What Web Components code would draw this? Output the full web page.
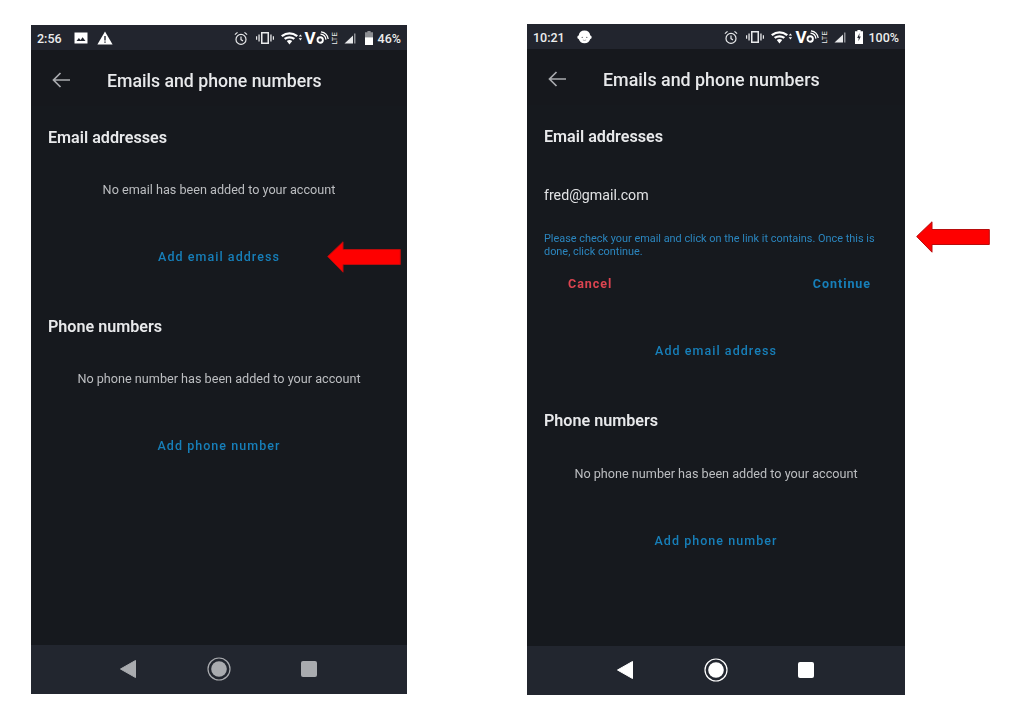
<!DOCTYPE html>
<html>
<head>
<meta charset="utf-8">
<title>Emails and phone numbers</title>
<style>
  html, body { margin: 0; padding: 0; background: #fff; }
  body { font-family: Roboto, "Noto Sans", sans-serif; }
</style>
</head>
<body>
<x-stage>
  <x-phone style="width: 376px; height: 669px; margin-top: 25px">
    <x-status-bar slot="status" time="2:56" level="46%" variant="left"></x-status-bar>
    <x-app-bar slot="bar" title="Emails and phone numbers"></x-app-bar>

    <x-section-title style="margin-top: 20px">Email addresses</x-section-title>
    <x-note style="margin-top: 30px">No email has been added to your account</x-note>
    <x-action center style="margin-top: 47px">Add email address</x-action>

    <x-section-title style="margin-top: 48px">Phone numbers</x-section-title>
    <x-note style="margin-top: 30px">No phone number has been added to your account</x-note>
    <x-action center style="margin-top: 47px">Add phone number</x-action>

    <x-nav-bar slot="nav" tone="#a9abaf"></x-nav-bar>
    <x-red-arrow slot="over" style="left: 296px; top: 216px"></x-red-arrow>
  </x-phone>

  <x-phone style="width: 378px; height: 671px; margin-top: 24px; margin-left: 120px; --title-size: 17.88px">
    <x-status-bar slot="status" time="10:21" level="100%" variant="right"></x-status-bar>
    <x-app-bar slot="bar" title="Emails and phone numbers"></x-app-bar>

    <x-section-title style="margin-top: 20px">Email addresses</x-section-title>
    <x-pending-email style="margin-top: 36px" email="fred@gmail.com">
      Please check your email and click on the link it contains. Once this is done, click continue.
    </x-pending-email>
    <x-action center style="margin-top: 47px">Add email address</x-action>

    <x-section-title style="margin-top: 48px">Phone numbers</x-section-title>
    <x-note style="margin-top: 31px">No phone number has been added to your account</x-note>
    <x-action center style="margin-top: 47px">Add phone number</x-action>

    <x-nav-bar slot="nav" tone="#ffffff"></x-nav-bar>
    <x-red-arrow slot="over" style="left: 389px; top: 197px"></x-red-arrow>
  </x-phone>
</x-stage>

<script>
const FONT = `Roboto, "Noto Sans", sans-serif`

const ICONS = {
  picture: `<svg width="14" height="12" viewBox="0 0 14 12"><path fill="#fff" d="M0.5 0.5h13v11h-13z"/><path fill="#22252e" d="M2.5 9l2.4-3 1.7 1.9 2-2.6L11.5 9z"/></svg>`,
  warning: `<svg width="16" height="14" viewBox="0 0 16 14"><path fill="#fff" d="M8 0.5L15.6 13.6H0.4z"/><path fill="#22252e" d="M7.3 5h1.4v4.6H7.3zM7.3 10.4h1.4v1.4H7.3z"/></svg>`,
  face: `<svg width="15" height="15" viewBox="0 0 15 15"><path fill="#fff" d="M7.500 0.600a6 6 0 0 1 5.800 5 1.800 1.800 0 0 1 0 3.500 6.100 6.100 0 0 1-11.600 0 1.800 1.800 0 0 1 0-3.500 6 6 0 0 1 5.800-5z"/><circle cx="5.200" cy="7.400" r="0.600" fill="#55585e"/><circle cx="9.800" cy="7.400" r="0.600" fill="#55585e"/><path d="M5.900 10q1.600 1 3.200 0" fill="none" stroke="#8b8d91" stroke-width="0.700"/></svg>`,
  alarm: `<svg width="14" height="15" viewBox="0 0 14 15" fill="none" stroke="#e8e9eb" stroke-width="1.2"><circle cx="7" cy="8.4" r="5"/><path d="M7 5.4v3.2l2 1.3M0.9 3.6l2.6-2.2M13.1 3.6l-2.6-2.2"/></svg>`,
  vibrate: `<svg width="18" height="12" viewBox="0 0 18 12" fill="#e8e9eb"><path fill-rule="evenodd" d="M5 0h8v12H5zM6.5 1.6v8.8h5V1.6z"/><path d="M2.4 2.4h1.3v7.2H2.4zM14.3 2.4h1.3v7.2h-1.3zM0 4.2h1.2v3.6H0zM16.8 4.2H18v3.6h-1.2z"/></svg>`,
  wifi: `<svg width="22" height="13" viewBox="0 0 22 13" fill="#fff"><path d="M0 3.2Q8.5-2.6 17 3.200l-1.500 1.700Q8.500 0.200 1.500 4.900z"/><path d="M2.900 6.100q5.600-3.800 11.200 0l-1.500 1.700q-4.100-2.600-8.200 0z"/><path d="M5.800 9q2.700-1.800 5.400 0L8.500 12.600z"/><path d="M19.400 2.400l1.700 2.200h-3.400zM19.400 8.400l-1.700-2.200h3.400z"/></svg>`,
  signal: `<svg width="12" height="11" viewBox="0 0 12 11" fill="#e8e9eb"><path d="M11.500 0.500v10H10V0.500z" opacity="0.550"/><path d="M9 2.500v8H0.500z"/></svg>`,
  batteryLow: `<svg width="8" height="14" viewBox="0 0 8 14"><path fill="#8c8e93" d="M2.400 0h3.200v1.200H8V7H0V1.200h2.400z"/><path fill="#fff" d="M0 6.400h8V14H0z"/></svg>`,
  batteryCharge: `<svg width="8" height="14" viewBox="0 0 8 14"><path fill="#fff" d="M2.400 0h3.200v1.200H8V14H0V1.200h2.400z"/><path fill="#22252e" d="M4.600 3L2.200 8h1.500l-0.300 3.200L5.800 6.400H4.200z"/></svg>`,
}

class Stage extends HTMLElement {
  constructor() {
    super()
    this.attachShadow({ mode: 'open' }).innerHTML = `
      <style>
        :host { display: flex; align-items: flex-start; box-sizing: border-box; width: 1016px; height: 717px; padding-left: 31px; overflow: hidden; font-family: ${FONT}; }
      </style>
      <slot></slot>`
  }
}

class Phone extends HTMLElement {
  constructor() {
    super()
    this.attachShadow({ mode: 'open' }).innerHTML = `
      <style>
        :host { display: flex; flex: none; flex-direction: column; position: relative; background: #16191e; }
        main { display: block; flex: 1; padding: 0 17px; }
        .filter { display: flex; flex-direction: column; height: 100%; filter: blur(0.35px); }
      </style>
      <div class="filter">
        <slot name="status"></slot>
        <slot name="bar"></slot>
        <main><slot></slot></main>
        <slot name="nav"></slot>
      </div>
      <slot name="over"></slot>`
  }
}

class StatusBar extends HTMLElement {
  constructor() {
    super()
    const left = this.getAttribute('variant') === 'left'
    this.attachShadow({ mode: 'open' }).innerHTML = `
      <style>
        :host { display: flex; align-items: center; flex: none; height: 25px; padding: 1px 6px 0; box-sizing: border-box; background: #22252e; color: #eceded; font-size: 12.5px; font-weight: 500; }
        .group { display: flex; align-items: center; }
        .time { margin-right: 12px; }
        .apps svg + svg { margin-left: 9px; }
        .icons { margin-left: auto; }
        .icons svg { flex: none; }
        .volte { display: flex; align-items: center; margin: 0 0 0 2px; }
        .v { font-size: 17px; font-weight: 700; line-height: 14px; color: #fff; width: 11px; }
        .lte { writing-mode: vertical-rl; transform: rotate(180deg); font-size: 7.5px; line-height: 8px; font-weight: 400; letter-spacing: 0.2px; }
        .level { margin-left: 5px; }
      </style>
      <div class="group apps">
        <span class="time">${this.getAttribute('time')}</span>
        ${left ? ICONS.picture + ICONS.warning : ICONS.face}
      </div>
      <div class="group icons">
        ${ICONS.alarm}
        <span style="width: 8px"></span>
        ${ICONS.vibrate}
        <span style="width: 7px"></span>
        ${ICONS.wifi}
        <div class="volte">
          <span class="v">V</span>
          <svg width="15" height="14" viewBox="0 0 15 14" fill="none" stroke="#fff"><circle cx="4.200" cy="9" r="2.700" stroke-width="1.900"/><path stroke-width="1.300" d="M4.500 3.200a6 6 0 0 1 5.400 5.400M5 0.800a8.500 8.500 0 0 1 7.200 7.200"/></svg>
          <span class="lte">LTE</span>
        </div>
        <span style="width: 5px"></span>
        ${ICONS.signal}
        <span style="width: 9px"></span>
        ${left ? ICONS.batteryLow : ICONS.batteryCharge}
        <span class="level">${this.getAttribute('level')}</span>
      </div>`
  }
}

class AppBar extends HTMLElement {
  constructor() {
    super()
    this.attachShadow({ mode: 'open' }).innerHTML = `
      <style>
        :host { display: flex; align-items: center; flex: none; height: 56px; padding: 6px 0 2px 21px; box-sizing: border-box; color: #e8e9eb; background: #16181d; }
        svg { margin-right: 37px; flex: none; }
        span { font-size: var(--title-size, 17.7px); font-weight: 500; line-height: 24px; position: relative; top: 0.5px; }
      </style>
      <svg width="18" height="16" viewBox="0 0 18 16" fill="none" stroke="#a9abaf" stroke-width="1.7"><path d="M18 8H1.500M8.500 1L1.500 8l7 7"/></svg>
      <span>${this.getAttribute('title')}</span>`
  }
}

class SectionTitle extends HTMLElement {
  constructor() {
    super()
    this.attachShadow({ mode: 'open' }).innerHTML = `
      <style>
        :host { display: block; height: 24px; line-height: 24px; font-size: 16.15px; font-weight: 600; color: #e8e9eb; }
      </style>
      <slot></slot>`
  }
}

class Note extends HTMLElement {
  constructor() {
    super()
    this.attachShadow({ mode: 'open' }).innerHTML = `
      <style>
        :host { display: block; height: 20px; line-height: 20px; font-size: 12.65px; text-align: center; color: #bcbec1; white-space: nowrap; }
      </style>
      <slot></slot>`
  }
}

class Action extends HTMLElement {
  constructor() {
    super()
    this.attachShadow({ mode: 'open' }).innerHTML = `
      <style>
        :host { display: block; height: 20px; line-height: 20px; font-size: 12.5px; font-weight: 500; letter-spacing: 1.05px; color: var(--action-color, #177fb9); white-space: nowrap; }
        :host([center]) { text-align: center; }
      </style>
      <slot></slot>`
  }
}

class PendingEmail extends HTMLElement {
  constructor() {
    super()
    this.attachShadow({ mode: 'open' }).innerHTML = `
      <style>
        :host { display: block; }
        .email { height: 20px; line-height: 20px; font-size: 14.2px; color: #e2e3e5; }
        .hint { margin-top: 27px; font-size: 10.9px; line-height: 13px; color: #2b86bf; }
        .actions { display: flex; justify-content: space-between; margin-top: 16px; padding: 0 17px 0 24px; }
        .actions x-action { font-weight: 700; letter-spacing: 0.95px; }
        .cancel { --action-color: #dc4450; }
      </style>
      <div class="email">${this.getAttribute('email')}</div>
      <div class="hint"><slot></slot></div>
      <div class="actions">
        <x-action class="cancel">Cancel</x-action>
        <x-action>Continue</x-action>
      </div>`
  }
}

class NavBar extends HTMLElement {
  constructor() {
    super()
    const tone = this.getAttribute('tone')
    this.attachShadow({ mode: 'open' }).innerHTML = `
      <style>
        :host { display: flex; justify-content: center; align-items: center; gap: 66px; flex: none; height: 49px; padding-bottom: 1px; box-sizing: border-box; background: #22262f; }
      </style>
      <svg width="24" height="24" viewBox="0 0 24 24" fill="${tone}"><path d="M3.500 12L18.500 3.500V20.500z" stroke="${tone}" stroke-linejoin="round" stroke-width="1"/></svg>
      <svg width="24" height="24" viewBox="0 0 24 24" fill="${tone}"><circle cx="12" cy="12" r="11" fill="none" stroke="${tone}" stroke-width="1.200"/><circle cx="12" cy="12" r="7.800"/></svg>
      <svg width="24" height="24" viewBox="0 0 24 24" fill="${tone}"><rect x="4" y="4" width="16" height="16" rx="2"/></svg>`
  }
}

class RedArrow extends HTMLElement {
  constructor() {
    super()
    this.attachShadow({ mode: 'open' }).innerHTML = `
      <style>
        :host { display: block; position: absolute; width: 74px; height: 32px; }
      </style>
      <svg width="74" height="32" viewBox="0 0 74 32"><path d="M0.700 15.500L16 0.800V8.500H73.300V23.500H16V31.200z" fill="#fe0000" stroke="#b80c0c" stroke-width="1"/></svg>`
  }
}

customElements.define('x-stage', Stage)
customElements.define('x-phone', Phone)
customElements.define('x-status-bar', StatusBar)
customElements.define('x-app-bar', AppBar)
customElements.define('x-section-title', SectionTitle)
customElements.define('x-note', Note)
customElements.define('x-action', Action)
customElements.define('x-pending-email', PendingEmail)
customElements.define('x-nav-bar', NavBar)
customElements.define('x-red-arrow', RedArrow)
</script>
</body>
</html>
